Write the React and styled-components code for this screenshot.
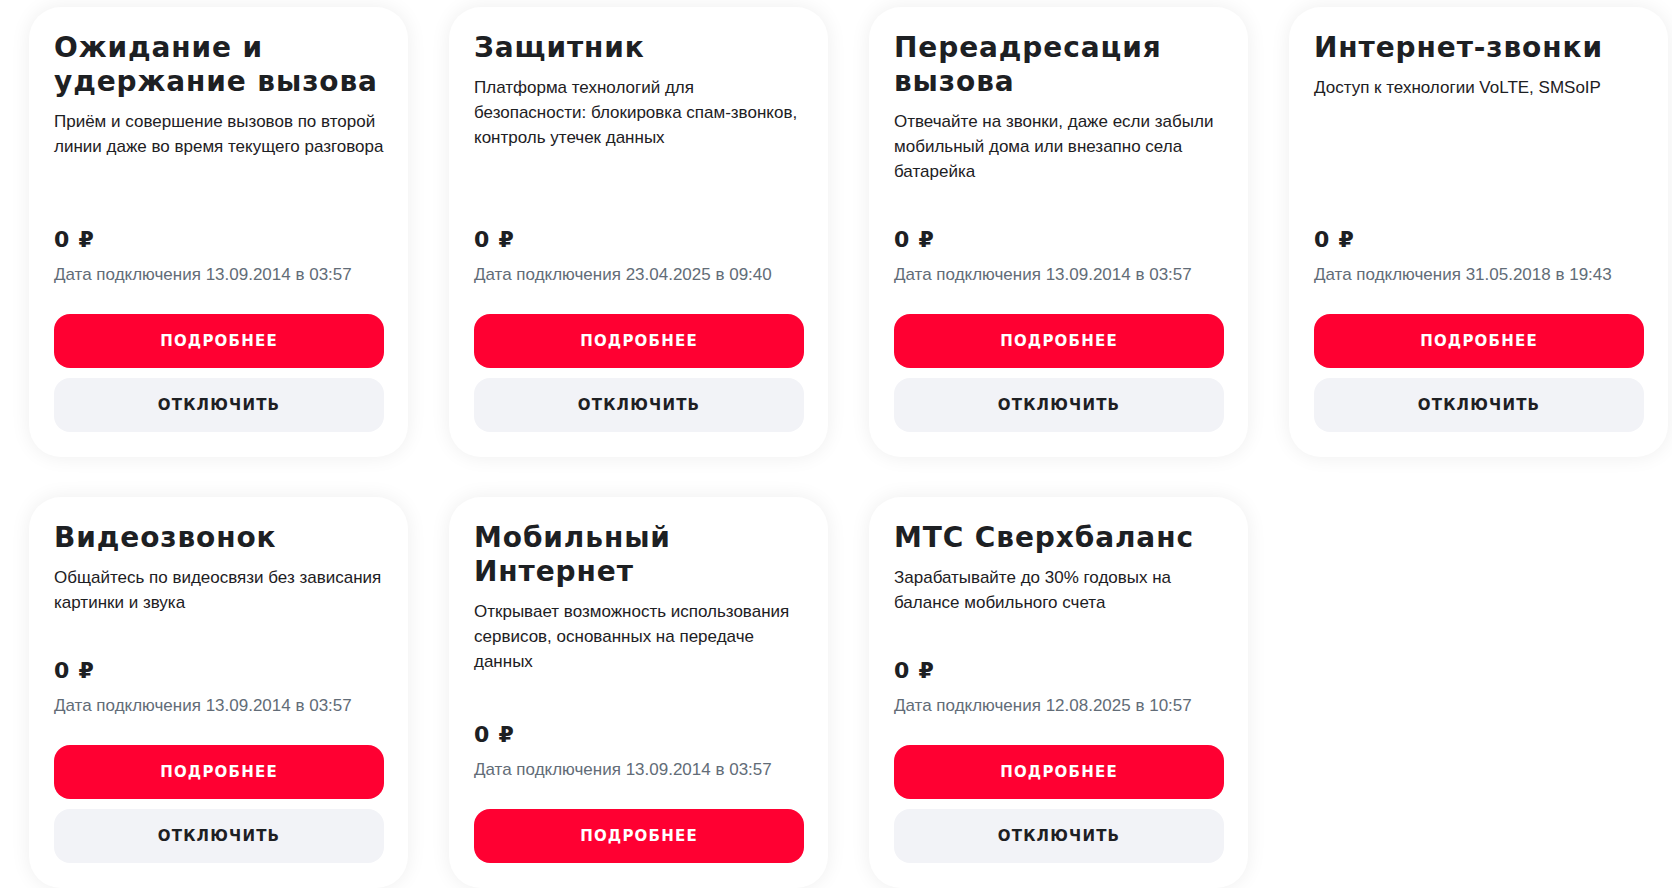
import React from "react";
import styled, { createGlobalStyle } from "styled-components";

const GlobalStyle = createGlobalStyle`
  html, body {
    margin: 0;
    padding: 0;
    background: #fff;
  }
  body {
    font-family: "Liberation Sans", Arial, sans-serif;
    color: #1d2023;
  }
`;

const Page = styled.main`
  padding: 7px 0 0 29px;
`;

const Grid = styled.div`
  display: grid;
  grid-template-columns: repeat(4, 379px);
  column-gap: 41px;
  row-gap: 40px;
`;

const Card = styled.article`
  display: flex;
  flex-direction: column;
  padding: 24px 24px 25px 25px;
  background: #fff;
  border-radius: 32px;
  box-shadow: 0 0 20px rgba(29, 32, 35, 0.07);
`;

const Title = styled.h3`
  margin: 0;
  font-family: "DejaVu Sans", sans-serif;
  font-weight: 700;
  font-size: 28px;
  line-height: 34px;
  letter-spacing: 0.9px;
  color: #1d2023;
`;

const Description = styled.p`
  margin: 10px 0 0;
  font-size: 17px;
  line-height: 25px;
  color: #1d2023;
`;

const Footer = styled.div`
  display: flex;
  flex-direction: column;
  margin-top: auto;
  padding-top: 42px;
`;

const Price = styled.div`
  font-family: "DejaVu Sans", sans-serif;
  font-weight: 700;
  font-size: 22px;
  line-height: 28px;
  letter-spacing: 0.8px;
`;

const ConnectDate = styled.div`
  margin-top: 8px;
  font-size: 17px;
  line-height: 25px;
  color: #626c77;
`;

const Actions = styled.div`
  display: flex;
  flex-direction: column;
  gap: 10px;
  margin-top: 27px;
`;

const Button = styled.button`
  height: 54px;
  border: none;
  border-radius: 16px;
  font-family: "DejaVu Sans", sans-serif;
  font-weight: 700;
  font-size: 15px;
  letter-spacing: 1.2px;
  text-transform: uppercase;
  cursor: pointer;
  background: ${(p) => (p.$primary ? "#ff0032" : "#f2f3f7")};
  color: ${(p) => (p.$primary ? "#fff" : "#1d2023")};
`;

const services = [
  {
    title: "Ожидание и удержание вызова",
    text: "Приём и совершение вызовов по второй линии даже во время текущего разговора",
    date: "13.09.2014 в 03:57",
  },
  {
    title: "Защитник",
    text: "Платформа технологий для безопасности: блокировка спам-звонков, контроль утечек данных",
    date: "23.04.2025 в 09:40",
  },
  {
    title: "Переадресация вызова",
    text: "Отвечайте на звонки, даже если забыли мобильный дома или внезапно села батарейка",
    date: "13.09.2014 в 03:57",
  },
  {
    title: "Интернет-звонки",
    text: "Доступ к технологии VoLTE, SMSoIP",
    date: "31.05.2018 в 19:43",
  },
  {
    title: "Видеозвонок",
    text: "Общайтесь по видеосвязи без зависания картинки и звука",
    date: "13.09.2014 в 03:57",
  },
  {
    title: "Мобильный Интернет",
    text: "Открывает возможность использования сервисов, основанных на передаче данных",
    date: "13.09.2014 в 03:57",
    locked: true,
  },
  {
    title: "МТС Сверхбаланс",
    text: "Зарабатывайте до 30% годовых на балансе мобильного счета",
    date: "12.08.2025 в 10:57",
  },
];

const ServiceCard = ({ title, text, date, locked }) => (
  <Card>
    <Title>{title}</Title>
    <Description>{text}</Description>
    <Footer>
      <Price>0 ₽</Price>
      <ConnectDate>Дата подключения {date}</ConnectDate>
      <Actions>
        <Button $primary>Подробнее</Button>
        {!locked && <Button>Отключить</Button>}
      </Actions>
    </Footer>
  </Card>
);

export default function App() {
  return (
    <>
      <GlobalStyle />
      <Page>
        <Grid>
          {services.map((s) => (
            <ServiceCard key={s.title} {...s} />
          ))}
        </Grid>
      </Page>
    </>
  );
}
